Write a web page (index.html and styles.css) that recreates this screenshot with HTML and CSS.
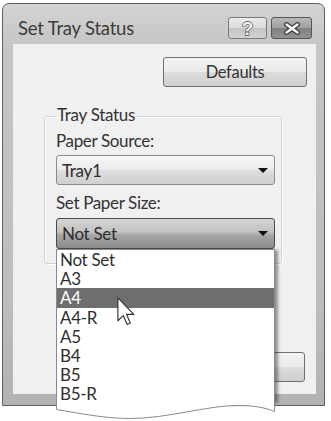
FILE: index.html
```html
<!DOCTYPE html>
<html lang="en">
<head>
<meta charset="utf-8">
<title>Set Tray Status</title>
<link rel="stylesheet" href="styles.css">
</head>
<body>
<div class="window">
  <div class="titlebar">
    <span class="title">Set Tray Status</span>
    <div class="caps">
      <button class="cap help" aria-label="Help"><span class="qmark">?</span></button>
      <button class="cap close" aria-label="Close">
        <svg width="20" height="13" viewBox="0 0 20 13"><path d="M4.5 2.5 L15.5 10.5 M15.5 2.5 L4.5 10.5" stroke="#3c3c3c" stroke-width="5" stroke-linecap="round" fill="none"/><path d="M4.5 2.5 L15.5 10.5 M15.5 2.5 L4.5 10.5" stroke="#f4f4f4" stroke-width="2.6" stroke-linecap="round" fill="none"/></svg>
      </button>
    </div>
  </div>
  <div class="client">
    <div class="top-row"><button class="btn defaults">Defaults</button></div>
    <fieldset class="group">
      <legend>Tray Status</legend>
      <label class="lbl lbl-source">Paper Source:</label>
      <div class="combo"><span>Tray1</span><i class="arrow"></i></div>
      <label class="lbl lbl-size">Set Paper Size:</label>
      <div class="combo open"><span>Not Set</span><i class="arrow"></i>
        <div class="dropdown">
          <ul>
            <li>Not Set</li>
            <li>A3</li>
            <li class="sel">A4</li>
            <li>A4-R</li>
            <li>A5</li>
            <li>B4</li>
            <li>B5</li>
            <li>B5-R</li>
          </ul>
          <svg class="wave" width="219" height="16" viewBox="0 0 219 16"><path d="M0 0 V5.5 C22 9 48 14.5 74 14.5 C112 14.5 150 1.5 182 1.5 C200 1.5 210 4 219 7.5 V0 Z" fill="#fff"/><path d="M0.5 0 V5.5 C22 9 48 14.5 74 14.5 C112 14.5 150 1.5 182 1.5 C200 1.5 210 4 218.5 7.5 V0" fill="none" stroke="#8a8a8a" stroke-width="1"/></svg>
        </div>
      </div>
    </fieldset>
    <div class="bottom-row">
      <button class="btn ok" aria-label="OK"></button>
      <button class="btn cancel" aria-label="Cancel"></button>
    </div>
  </div>
</div>
<svg class="cursor" width="18" height="29" viewBox="0 0 12.4 20"><path d="M0.6 0.6 V16.4 L4.3 12.8 L7 18.9 L9.2 17.9 L6.6 12 H11.6 Z" fill="#fff" stroke="#333" stroke-width="0.8" stroke-linejoin="round"/></svg>
</body>
</html>
```
FILE: styles.css
```css
* { box-sizing: border-box; }
html, body { margin: 0; padding: 0; }
body {
  width: 331px;
  height: 421px;
  background: #fff;
  font-family: Lato, "Liberation Sans", sans-serif;
  color: #333;
  position: relative;
  overflow: hidden;
}
.window {
  margin: 3px 0 0 2px;
  width: 323px;
  height: 403px;
  border: 1px solid #5e5e5e;
  border-radius: 7px 7px 0 0;
  background: linear-gradient(#d3d3d3, #c6c6c6 40px, #bdbdbd 300px, #b2b2b2);
  padding: 0 8px 11px 10px;
  display: flex;
  flex-direction: column;
}
.titlebar {
  height: 40px;
  display: flex;
  justify-content: space-between;
  align-items: flex-start;
  padding: 13px 4px 0 5px;
}
.title {
  font-size: 18.5px;
  line-height: 22px;
  letter-spacing: -0.2px;
  color: #3c3c3c;
}
.caps { display: flex; gap: 4px; }
.cap {
  width: 39px;
  height: 22px;
  border: 1px solid #7a7a7a;
  border-radius: 3px;
  padding: 0;
  margin: 0;
  display: flex;
  align-items: center;
  justify-content: center;
}
.help { background: linear-gradient(#ececec, #dadada 50%, #c4c4c4 50%, #d2d2d2); }
.close {
  width: 41px;
  border-color: #555;
  background: linear-gradient(#b8b8b8, #a0a0a0 50%, #808080 50%, #929292);
}
.qmark {
  font-family: "Liberation Sans", sans-serif;
  font-weight: bold;
  font-size: 19px;
  line-height: 19px;
  color: #f0f0f0;
  -webkit-text-stroke: 1.3px #4a4a4a;
  paint-order: stroke fill;
}
.close svg { display: block; }
.client {
  flex: 1;
  background: #f0f0f0;
  display: flex;
  flex-direction: column;
}
.top-row {
  display: flex;
  justify-content: flex-end;
  padding: 13px 9px 0 0;
}
.btn {
  height: 30px;
  margin: 0;
  border: 1px solid #707070;
  border-radius: 3px;
  background: linear-gradient(#f3f3f3, #ebebeb 50%, #dddddd 50%, #cfcfcf);
  font-family: Lato, "Liberation Sans", sans-serif;
  font-size: 16.5px;
  letter-spacing: -0.3px;
  color: #333;
  padding: 0;
}
.defaults { width: 144px; }
.group {
  margin: 20px 34px 0 31px;
  border: 1px solid #d3d3d3;
  border-radius: 3px;
  padding: 6px 6px 14px 11px;
  min-width: 0;
  box-shadow: inset 1px 1px 0 #fff, 1px 1px 0 #fff;
}
.group legend {
  padding: 0 2px 3px;
  margin-left: -1px;
  font-size: 17px;
  line-height: 15px;
  letter-spacing: -0.3px;
  color: #333;
}
.lbl {
  display: block;
  font-size: 17px;
  line-height: 19px;
  letter-spacing: -0.35px;
  color: #333;
}
.lbl-source { margin-bottom: 5px; }
.lbl-size { margin: 8px 0 6px; }
.combo {
  position: relative;
  height: 30px;
  border: 1px solid #8a8a8a;
  border-radius: 3px;
  background: linear-gradient(#f6f6f6, #ececec 45%, #dcdcdc 55%, #d0d0d0);
  display: flex;
  align-items: center;
  justify-content: space-between;
  padding: 0 6px 0 5px;
  font-size: 17px;
  letter-spacing: -0.3px;
  color: #2e2e2e;
}
.combo.open {
  height: 31px;
  border-color: #4a4a4a;
  background: linear-gradient(#d4d4d4, #c2c2c2 45%, #a6a6a6 55%, #8c8c8c);
}
.arrow {
  width: 0;
  height: 0;
  border-left: 5px solid transparent;
  border-right: 5px solid transparent;
  border-top: 5px solid #111;
}
.dropdown {
  position: absolute;
  top: calc(100% + 1px);
  left: -1px;
  right: -1px;
  z-index: 5;
}
.dropdown ul {
  list-style: none;
  margin: 0;
  padding: 0;
  background: #fff;
  border: 1px solid #8a8a8a;
  border-bottom: 0;
  box-shadow: 4px 0 3px -1px rgba(0, 0, 0, 0.4);
}
.dropdown li {
  height: 19.2px;
  line-height: 19.2px;
  padding-left: 3px;
  font-size: 17px;
  letter-spacing: -0.3px;
  color: #2e2e2e;
}
.dropdown li.sel { background: #6e6e6e; color: #fff; }
.wave { display: block; }
.bottom-row {
  margin-top: auto;
  display: flex;
  justify-content: flex-end;
  gap: 6px;
  padding: 0 11px 12px 0;
}
.ok, .cancel { width: 92px; }
.cursor {
  position: absolute;
  left: 117px;
  top: 297px;
  z-index: 10;
}
```
